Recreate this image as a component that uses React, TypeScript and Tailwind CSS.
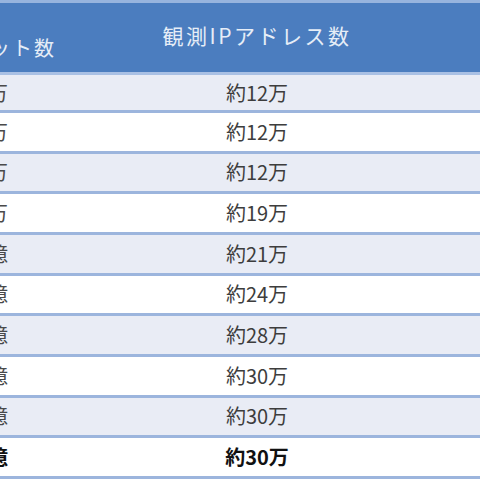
import React from "react";

const rows = [
  { l: "万", r: "約12万" },
  { l: "万", r: "約12万" },
  { l: "万", r: "約12万" },
  { l: "万", r: "約19万" },
  { l: "億", r: "約21万" },
  { l: "億", r: "約24万" },
  { l: "億", r: "約28万" },
  { l: "億", r: "約30万" },
  { l: "億", r: "約30万" },
  { l: "億", r: "約30万", bold: true },
];

export default function App() {
  return (
    <div
      className="w-[480px] h-[480px] overflow-hidden bg-white"
      style={{ fontFamily: '"Noto Sans CJK JP", "Noto Sans", sans-serif' }}
    >
      <div className="flex flex-col w-[480px]">
        <div className="flex h-[75px] bg-[#4b7dbf] border-t-[3px] border-t-[#97b4de] border-b-[3px] border-b-[#a9c0e4]">
          <div className="w-[60px] flex items-end justify-end pb-[9px] overflow-hidden">
            <span className="text-[20px] text-[#e6edf7] whitespace-nowrap tracking-[2px] mr-[4px]">パケット数</span>
          </div>
          <div className="w-[394px] flex items-center justify-center pb-[4px]">
            <span className="text-[21px] text-[#e6edf7] tracking-[2.5px] whitespace-nowrap">観測IPアドレス数</span>
          </div>
          <div className="flex-1" />
        </div>
        {rows.map((row, i) => (
          <div
            key={i}
            className={`flex border-b-[3px] border-b-[#9cb5dd] ${i === 0 ? "h-[38px]" : "h-[40.67px]"} ${i % 2 === 0 ? "bg-[#e9ecf5]" : "bg-white"}`}
          >
            <div className="w-[60px] flex items-center justify-start overflow-hidden">
              <span className={`text-[20px] -ml-[12px] leading-none ${row.bold ? "font-bold text-[#111]" : "text-[#4a4a4a]"}`}>
                {row.l}
              </span>
            </div>
            <div className="w-[394px] flex items-center justify-center">
              <span className={`text-[20px] leading-none ${row.bold ? "font-bold text-[#111]" : "text-[#3d3d3d]"}`}>
                {row.r}
              </span>
            </div>
            <div className="flex-1" />
          </div>
        ))}
      </div>
    </div>
  );
}
